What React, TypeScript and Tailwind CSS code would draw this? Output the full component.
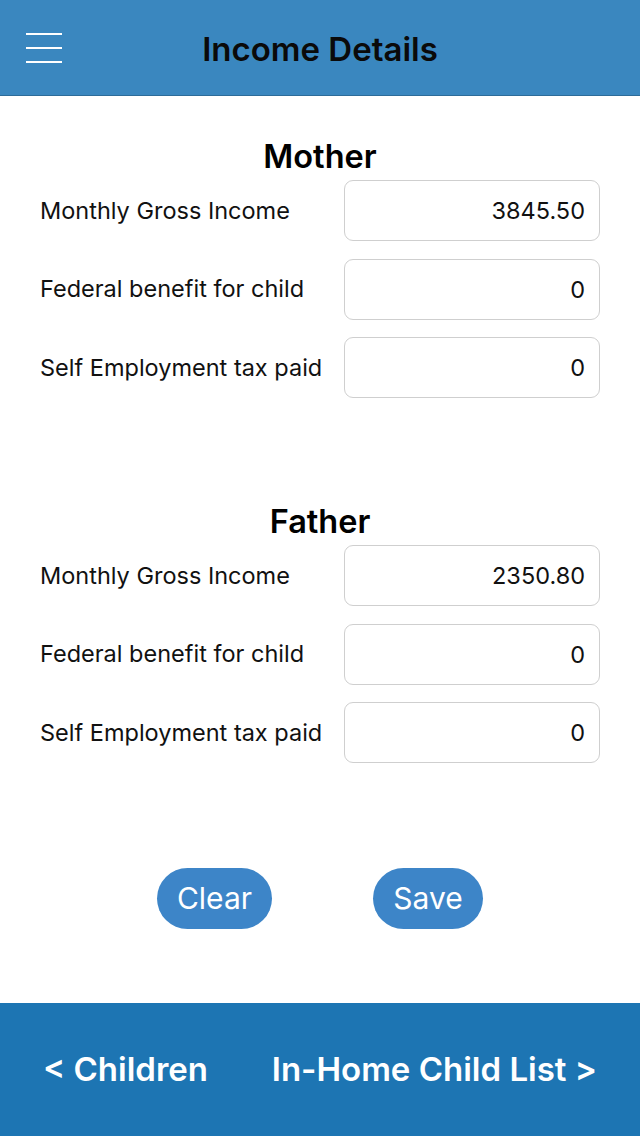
const fields = ['Monthly Gross Income', 'Federal benefit for child', 'Self Employment tax paid'];

const parents = [
    { name: 'Mother', values: ['3845.50', '0', '0'] },
    { name: 'Father', values: ['2350.80', '0', '0'] },
];

const ParentSection = ({ name, values }: { name: string; values: string[] }) => {
    return (
        <section className="flex flex-col">
            <h2 className="text-center text-[32.5px] leading-[36px] font-semibold text-black">{name}</h2>
            <div className="mt-[5px] flex flex-col gap-[17.5px]">
                {fields.map((label, i) => (
                    <div key={label} className="flex items-center justify-between pl-[40px] pr-[40px]">
                        <span className="text-[23.5px] text-[#111]">{label}</span>
                        <input
                            readOnly
                            value={values[i]}
                            className="w-[256px] h-[61px] rounded-[9px] border border-[#cfcfcf] bg-white px-[14px] text-right text-[23.5px] text-[#111] outline-none"
                        />
                    </div>
                ))}
            </div>
        </section>
    );
};

export default function App() {
    return (
        <div className="w-[640px] h-[1136px] flex flex-col bg-white font-['Inter','Liberation_Sans',sans-serif]">
            <header className="h-[96px] shrink-0 grid grid-cols-[1fr_auto_1fr] items-center bg-[#3a87bf] border-b border-[#2d6c99]">
                <div className="pl-[26px] flex flex-col gap-[12px] w-fit">
                    <span className="block w-[36px] h-[2px] bg-white"></span>
                    <span className="block w-[36px] h-[2px] bg-white"></span>
                    <span className="block w-[36px] h-[2px] bg-white"></span>
                </div>
                <h1 className="pt-[4px] text-[33px] font-semibold text-[#0a0a0a]">Income Details</h1>
                <div></div>
            </header>

            <main className="flex-1 flex flex-col pt-[43px]">
                <ParentSection {...parents[0]} />
                <div className="h-[106px]"></div>
                <ParentSection {...parents[1]} />
                <div className="mt-[105px] flex justify-center gap-[101px]">
                    <button className="w-[115px] h-[61px] rounded-full bg-[#3d85c8] text-white text-[30px]">Clear</button>
                    <button className="w-[110px] h-[61px] rounded-full bg-[#3d85c8] text-white text-[30px]">Save</button>
                </div>
            </main>

            <footer className="h-[133px] shrink-0 flex items-center justify-between px-[43px] bg-[#1d75b3] text-white text-[33px] font-semibold">
                <span>&lt; Children</span>
                <span>In-Home Child List &gt;</span>
            </footer>
        </div>
    );
}
